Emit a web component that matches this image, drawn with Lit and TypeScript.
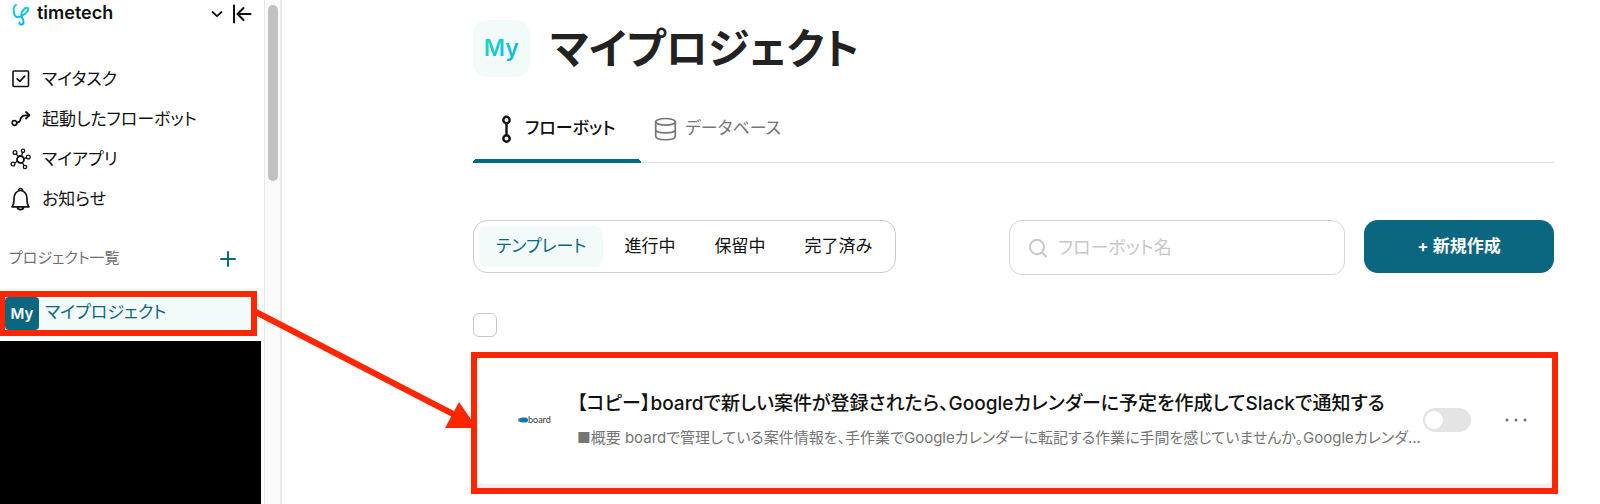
import { LitElement, html, css, svg } from "lit";
import { customElement, state } from "lit/decorators.js";

const icons = {
  task: svg`<rect x="3" y="3" width="15.500" height="15.500" rx="1" stroke-width="1.600"/><path d="M7.200 10.800l2.600 2.600 5-5.200" stroke-width="1.700"/>`,
  launched: svg`<circle cx="4.500" cy="15" r="2.300" stroke-width="1.700"/><path d="M7 14.300c3.800.2 2.600-1.800 4-4.400C12.300 7.500 14 7.200 19 7.200M16 4l3.500 3.200L16 10.500" stroke-width="1.800"/>`,
  apps: svg`<circle cx="10.500" cy="11.500" r="3.500" stroke-width="1.800"/><g stroke-width="1.300"><circle cx="5" cy="4.500" r="1.900"/><circle cx="13" cy="2.800" r="1.700"/><circle cx="18.300" cy="9" r="1.900"/><circle cx="3" cy="16" r="1.900"/><circle cx="15" cy="19" r="1.700"/><path d="M6.200 6l2.200 2.700M12.500 4.500l-1 3.600M16.500 9.700l-2.600.9M4.700 15l2.600-1.700M14 17.500l-1.800-3"/></g>`,
  bell: svg`<path d="M2 18.800c2-2 2-3.500 2-8 0-4.900 2.800-8.300 6.500-8.300s6.500 3.400 6.500 8.300c0 4.500 0 6 2 8zM8.500 2.500a2 2 0 0 1 4 0M7.300 19c.6 3.400 5.800 3.400 6.400 0" stroke-width="1.700"/>`,
};

const menu = [
  { label: "マイタスク", icon: icons.task },
  { label: "起動したフローボット", icon: icons.launched },
  { label: "マイアプリ", icon: icons.apps },
  { label: "お知らせ", icon: icons.bell },
];

const filters = ["テンプレート", "進行中", "保留中", "完了済み"];

const base = css`
  * { box-sizing: border-box; }
  button, input { font: inherit; color: inherit; font-feature-settings: inherit; }
  button { border: 0; padding: 0; background: none; cursor: pointer; }
  a { color: inherit; text-decoration: none; }
  svg { display: block; flex: none; fill: none; stroke: currentColor; stroke-linecap: round; stroke-linejoin: round; }
`;

@customElement("side-bar")
class SideBar extends LitElement {
  static styles = [base, css`
    :host { display: flex; width: 282px; flex: none; overflow: hidden; }
    .panel { flex: 1; min-width: 0; display: flex; flex-direction: column; }
    .brand { display: flex; align-items: center; height: 28px; padding: 0 12px; }
    .name { font-size: 18px; line-height: 24px; font-weight: 600; flex: 1; margin-left: 4px; padding-bottom: 2px; }
    .brand button + button { margin-left: 9px; }
    .menu { list-style: none; margin: 31px 0 0; padding: 0 10px; font-size: 17px; }
    .item { display: flex; align-items: center; gap: 11px; height: 40px; line-height: 24px; }
    .item svg { overflow: visible; }
    .heading { display: flex; align-items: center; justify-content: space-between; height: 32px; margin: 24px 28px 16px 9px; }
    h2 { margin: 0; padding-bottom: 2px; font-size: 15px; line-height: 24px; font-weight: 400; color: #707070; }
    .add { color: #0b6780; }
    .marked { border: 6px solid #ff2600; border-left-width: 5px; height: 45px; width: 257px; }
    .project { display: flex; align-items: center; gap: 6px; height: 100%; background: #f2fafa; color: #0b6780; font-size: 17px; line-height: 24px; }
    .project-name { padding-bottom: 3px; }
    .tile { width: 34px; height: 33px; border-radius: 4px; background: #0b6780; color: #fff; font-size: 15px; font-weight: 600; display: grid; place-items: center; }
    .hidden { flex: 1; min-height: 163px; margin: 5px 3px 0 0; background: #000; }
    .track { width: 18px; background: #fafafa; border: solid #e8e8e8; border-width: 0 2px 0 1px; padding: 5px 3px 0 3px; }
    .thumb { height: 176px; width: 10px; border-radius: 5px; background: #c1c1c1; }
  `];

  render() {
    return html`
      <nav class="panel" aria-label="メニュー">
        <div class="brand">
          <svg width="21" height="24" viewBox="0 0 21 24" aria-hidden="true">
            <defs><linearGradient id="g" x1="0" y1="0" x2="0" y2="1"><stop offset="0" stop-color="#1fd3c4"/><stop offset="1" stop-color="#08b4f5"/></linearGradient></defs>
            <path stroke="url(#g)" stroke-width="2" d="M4 3C.5 4 1 15.500 6 15C10.500 14.500 17 9.500 16.200 6.500C15 3.500 8.500 9 9.500 14C10 17 12 17.500 11.500 20.500C11 23.500 6.500 23 7.500 20.500"/>
          </svg>
          <span class="name">timetech</span>
          <button aria-label="ワークスペースを選択"><svg width="12" height="8" viewBox="0 0 12 8"><path d="M1.500 2L6 6.200 10.500 2" stroke-width="1.800"/></svg></button>
          <button aria-label="サイドバーを閉じる"><svg width="20" height="20" viewBox="0 0 20 20"><path d="M2 1.500v17M18.500 10H6M11.500 4L5.500 10l6 6" stroke-width="2"/></svg></button>
        </div>
        <ul class="menu">
          ${menu.map((m) => html`<li><a class="item" href="#"><svg width="21" height="22" viewBox="0 0 21 22" aria-hidden="true">${m.icon}</svg>${m.label}</a></li>`)}
        </ul>
        <div class="heading">
          <h2>プロジェクト一覧</h2>
          <button class="add" aria-label="プロジェクトを追加"><svg width="16" height="16" viewBox="0 0 16 16"><path d="M8 1v14M1 8h14" stroke-width="2"/></svg></button>
        </div>
        <div class="marked"><a class="project" href="#"><span class="tile">My</span><span class="project-name">マイプロジェクト</span></a></div>
        <div class="hidden"></div>
      </nav>
      <div class="track"><div class="thumb"></div></div>
    `;
  }
}

@customElement("flow-card")
class FlowCard extends LitElement {
  static styles = [base, css`
    :host { display: block; border: 6px solid #ff2600; background: #f0f0f0; }
    .card { display: flex; align-items: center; height: 126px; margin-bottom: 4px; padding: 0 25px 2px 41px; background: #fff; border-radius: 0 0 8px 8px; }
    .text { flex: 1; min-width: 0; margin-left: 25px; }
    h3 { margin: 0; font-size: 19px; line-height: 28px; font-weight: 500; white-space: nowrap; }
    p { margin: 8px 0 0; font-size: 15px; line-height: 24px; color: #757575; white-space: nowrap; }
    .switch { appearance: none; flex: none; width: 48px; height: 24px; margin: 0 34px 0 7px; padding: 3px 2px; border-radius: 12px; background: #e4e4e4; }
    .switch::before { content: ""; display: block; width: 18px; height: 18px; border-radius: 9px; background: #fff; }
    .switch:checked { background: #0b6780; }
    .switch:checked::before { margin-left: 26px; }
    .logo { font-family: Lato, sans-serif; font-size: 9px; fill: #333; stroke: none; overflow: visible; }
  `];

  render() {
    return html`
      <article class="card">
        <svg class="logo" width="34" height="12" viewBox="0 0 34 12" role="img" aria-label="board">
          <rect x="0" y="4" width="8" height="4" rx="2" fill="#6c7c86"/><rect x="2" y="3.500" width="8" height="5" rx="2.500" fill="#0878b0"/>
          <text x="10" y="9">board</text>
        </svg>
        <div class="text">
          <h3>【コピー】boardで新しい案件が登録されたら、Googleカレンダーに予定を作成してSlackで通知する</h3>
          <p>■概要 boardで管理している案件情報を、手作業でGoogleカレンダーに転記する作業に手間を感じていませんか。Googleカレンダ...</p>
        </div>
        <input class="switch" type="checkbox" role="switch" aria-label="フローボットを有効にする" />
        <button aria-label="その他の操作"><svg width="22" height="8" viewBox="0 0 22 8"><g fill="#707070" stroke="none"><circle cx="2" cy="4" r="1.500"/><circle cx="11" cy="4" r="1.500"/><circle cx="20" cy="4" r="1.500"/></g></svg></button>
      </article>
    `;
  }
}

@customElement("project-page")
class ProjectPage extends LitElement {
  @state() filter = filters[0];

  static styles = [base, css`
    :host { display: block; flex: 1; min-width: 0; padding: 20px 46px 10px 191px; }
    header { display: flex; align-items: center; gap: 20px; height: 57px; }
    .badge { width: 57px; height: 57px; border-radius: 14px; background: #f2fafa; display: grid; place-items: center; font-size: 23px; line-height: 28px; font-weight: 600; padding-bottom: 2px; }
    .badge span { background: linear-gradient(135deg, #1fd3c4 20%, #08b4f5 90%); background-clip: text; -webkit-background-clip: text; color: transparent; }
    h1 { margin: 0; font-size: 42px; line-height: 57px; font-weight: 600; color: #222; }
    .tabs { display: flex; height: 86px; padding-top: 17px; border-bottom: 1px solid #dbe2e5; }
    .tab { display: flex; align-items: center; font-size: 17px; line-height: 24px; height: 69px; }
    .tab span { padding-bottom: 1px; }
    .tab.current { width: 168px; padding-left: 26px; gap: 11px; font-weight: 500; background: radial-gradient(circle 4px at 4px 4px, #006c84 98%, transparent) left bottom / 4px 4px no-repeat, radial-gradient(circle 4px at 0 4px, #006c84 98%, transparent) right bottom / 4px 4px no-repeat, linear-gradient(#006c84, #006c84) bottom / calc(100% - 8px) 4px no-repeat; }
    .tab.other { margin-left: 13px; gap: 8px; color: #757575; }
    .tools { display: flex; align-items: flex-start; margin-top: 57px; }
    .filters { display: flex; gap: 3px; height: 53px; border: 1px solid #ccc; border-radius: 14px; padding: 5px; font-size: 17px; line-height: 24px; }
    .filters button { height: 41px; padding: 0 18px 1px; border-radius: 8px; }
    .filters button:first-child { padding: 0 17px 1px; }
    .filters .on { background: #f2fafa; color: #0b6780; }
    .search { display: flex; align-items: center; gap: 10px; width: 336px; height: 55px; margin-left: auto; border: 1px solid #d0d7de; border-radius: 13px; padding: 0 18px; color: #c8c8c8; font-size: 18px; line-height: 24px; }
    .search input { flex: 1; min-width: 0; border: 0; outline: 0; padding: 0; background: none; color: #222; }
    .search input::placeholder { color: #c8c8c8; opacity: 1; }
    .create { width: 190px; height: 53px; margin-left: 19px; padding-bottom: 1px; border-radius: 14px; background: #0b6780; color: #fff; font-size: 17px; line-height: 24px; font-weight: 600; }
    .all { appearance: none; display: block; width: 24px; height: 24px; margin: 38px 0 15px; border: 1px solid #c8c8c8; border-radius: 6px; background: #fff; }
    .all:checked { background: #0b6780; }
    flow-card { margin: 0 -4px 0 -2px; }
  `];

  render() {
    return html`
      <header><div class="badge"><span>My</span></div><h1>マイプロジェクト</h1></header>
      <nav class="tabs">
        <a class="tab current" href="#" aria-current="page">
          <svg width="15" height="28" viewBox="0 0 15 28" aria-hidden="true"><g stroke-width="2.400"><circle cx="7.500" cy="5" r="3.200"/><circle cx="7.500" cy="23.500" r="3.200"/><path d="M7.500 8.500v11.500"/></g></svg><span>フローボット</span></a>
        <a class="tab other" href="#">
          <svg width="23" height="24" viewBox="0 0 23 24" aria-hidden="true"><g stroke-width="1.700"><ellipse cx="11.500" cy="4.800" rx="9.800" ry="3.300"/><path d="M1.700 5v14c0 5 19.600 5 19.600 0V5M1.700 12.500c0 4.500 19.600 4.500 19.600 0"/></g></svg><span>データベース</span></a>
      </nav>
      <div class="tools">
        <div class="filters">
          ${filters.map((f) => html`<button class=${f === this.filter ? "on" : ""} @click=${() => (this.filter = f)}>${f}</button>`)}
        </div>
        <label class="search">
          <svg width="20" height="20" viewBox="0 0 20 20" aria-hidden="true"><path d="M14.300 14.800L18 18.500M16 9a7 7.300 0 1 1-14 0a7 7.300 0 1 1 14 0" stroke-width="2"/></svg>
          <input type="search" placeholder="フローボット名" aria-label="フローボット名" />
        </label>
        <button class="create">+ 新規作成</button>
      </div>
      <input class="all" type="checkbox" aria-label="すべて選択" />
      <flow-card></flow-card>
    `;
  }
}

@customElement("app-root")
class AppRoot extends LitElement {
  static styles = css`
    :host { display: flex; position: relative; min-height: 100vh; overflow: hidden; background: #fff; color: #111; font-family: Inter, "Noto Sans CJK JP", sans-serif; font-feature-settings: "palt"; }
    .arrow { position: absolute; left: 250px; top: 300px; pointer-events: none; }
  `;

  render() {
    return html`
      <side-bar></side-bar>
      <project-page></project-page>
      <svg class="arrow" width="230" height="140" viewBox="250 300 230 140" aria-hidden="true">
        <path d="M254 311L455 415" stroke="#ff2600" stroke-width="6"/>
        <path d="M459 402L477 428L445 428Z" fill="#ff2600"/>
      </svg>
    `;
  }
}
